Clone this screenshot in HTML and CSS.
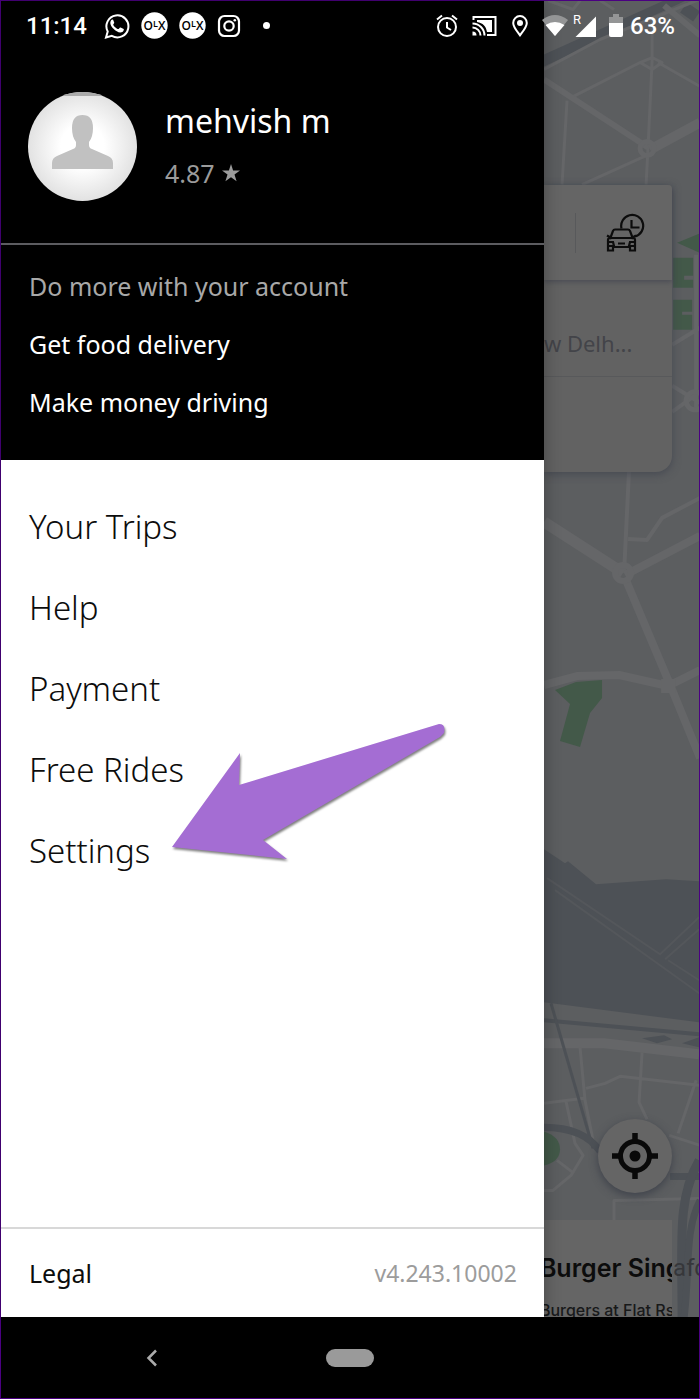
FILE: index.html
```
<!DOCTYPE html>
<html lang="en">
<head>
<meta charset="utf-8">
<meta name="viewport" content="width=device-width, initial-scale=1">
<title>Account menu</title>
<link rel="stylesheet" href="styles.css">
</head>
<body>
<div class="phone">
  <div class="screen">
    <header class="status">
      <div class="status-left">
        <span class="status-text">11:14</span>
        <svg class="whatsapp" width="26" height="26" viewBox="0 0 26 26" aria-label="WhatsApp">
          <path d="M2 24.500l1.700-6A11 11 0 1 1 7.800 22.800z" fill="none" stroke="#fff" stroke-width="2"/>
          <path d="M9.100 6.700c-.5-.6-1.400-.3-2 .5-2 3 .2 6.300 2.400 8.600 2.500 2.500 6 4.700 8.900 3.200 1.300-.8 1.700-2.400 1.300-2.900l-3.100-1.600c-.5-.2-.8 0-1.700 1.200-.4.500-1 .3-2.200-.3-1.700-.9-2.900-2.300-3.500-3.600-.2-.6.900-1.200 1.100-2.100z" fill="#fff"/>
        </svg>
        <svg width="27" height="27" viewBox="0 0 27 27" aria-label="OLX">
          <circle cx="13.500" cy="13.500" r="13.200" fill="#fff"/>
          <text class="olx" x="13.500" y="18">O<tspan class="olx-l" dy="-3">L</tspan><tspan dy="3">X</tspan></text>
        </svg>
        <svg width="27" height="27" viewBox="0 0 27 27" aria-label="OLX">
          <circle cx="13.500" cy="13.500" r="13.200" fill="#fff"/>
          <text class="olx" x="13.500" y="18">O<tspan class="olx-l" dy="-3">L</tspan><tspan dy="3">X</tspan></text>
        </svg>
        <svg width="24" height="24" viewBox="0 0 24 24" fill="none" stroke="#fff" aria-label="Instagram">
          <rect x="2" y="2" width="20" height="20" rx="5.500" stroke-width="2.200"/>
          <circle cx="12" cy="12" r="4.700" stroke-width="2.200"/>
          <circle cx="17.800" cy="6.200" r="1.300" fill="#fff" stroke="none"/>
        </svg>
        <span class="dot"></span>
      </div>
      <div class="status-right">
        <svg width="22" height="24" viewBox="0 0 22 24" fill="none" stroke="#fff" stroke-width="2" aria-label="Alarm">
          <circle cx="11" cy="13" r="9"/>
          <path d="M11 8v5.500l4 2.500M1 5.500l5-4M21 5.500l-5-4"/>
        </svg>
        <svg class="cast" width="25" height="22" viewBox="0 0 25 22" fill="none" stroke="#fff" stroke-width="2" aria-label="Casting">
          <path d="M1.500 5V2h22v18H15"/>
          <path d="M5 5h15v12h-5C14 11 11 8 5 7z" fill="#fff" stroke="none"/>
          <path d="M.5 8.500A12 12 0 0 1 12.500 20.500M.5 12.500a8 8 0 0 1 8 8"/>
          <path d="M.5 16.500a4 4 0 0 1 4 4h-4z" fill="#fff" stroke="none"/>
        </svg>
        <svg class="pin" width="16" height="22" viewBox="0 0 16 22" aria-label="Location">
          <path d="M8 20.300C4.500 15.500 1.200 11.800 1.200 7.900a6.800 6.800 0 0 1 13.600 0C14.800 11.800 11.500 15.500 8 20.300z" fill="none" stroke="#fff" stroke-width="2"/>
          <circle cx="8" cy="8" r="3" fill="#fff"/>
        </svg>
        <svg class="wifi" width="26" height="21" viewBox="0 0 26 21" aria-label="Wi-Fi">
          <path d="M13 21L0 5q13-10 26 0z" fill="#949596"/>
          <path d="M13 21L3.500 10q9.500-6 19 0z" fill="#fff"/>
        </svg>
        <svg class="signal" width="24" height="28" viewBox="0 0 24 28" aria-label="Roaming signal">
          <path d="M2.500 25L23 4.500V25z" fill="#fff"/>
          <text class="roaming" x="0" y="12">R</text>
        </svg>
        <svg class="battery" width="14" height="23" viewBox="0 0 14 23" aria-label="Battery">
          <path d="M0 3h4V0h6v3h4v8H0z" fill="#949596"/>
          <path d="M0 9h14v12q0 2-2 2H2q-2 0-2-2z" fill="#fff"/>
        </svg>
        <span class="status-text">63%</span>
      </div>
    </header>

    <aside class="drawer">
      <section class="profile">
        <svg class="avatar" viewBox="0 0 109 109" aria-label="Profile photo">
          <defs>
            <radialGradient id="photo"><stop offset=".4" stop-color="#fff"/><stop offset="1" stop-color="#e2e2e2"/></radialGradient>
            <clipPath id="round"><circle cx="54.500" cy="54.500" r="54.500"/></clipPath>
          </defs>
          <g clip-path="url(#round)">
            <rect width="109" height="109" fill="url(#photo)"/>
            <rect width="109" height="4" fill="#aaa"/>
            <path d="M24 77v-6q0-5 5-7l16-7q3-1 3-4v-3q-4-5-4-14 0-13 10.500-13T65 36q0 9-4 14v3q0 3 3 4l16 7q5 2 5 7v6z" fill="#c1c1c1"/>
          </g>
        </svg>
        <div class="identity">
          <h1 class="name">mehvish m</h1>
          <p class="rating">4.87
            <svg width="18" height="18" viewBox="0 0 18 18" aria-label="stars"><path d="M9 0l2.100 6.500H18l-5.500 4 2.100 6.800L9 13.200l-5.600 4.100 2.100-6.800L0 6.500h6.900z" fill="#9b9b9b"/></svg>
          </p>
        </div>
      </section>
      <section class="promo">
        <p class="promo-title">Do more with your account</p>
        <a class="promo-link" href="#food">Get food delivery</a>
        <a class="promo-link" href="#drive">Make money driving</a>
      </section>
      <nav class="menu">
        <a href="#trips">Your Trips</a>
        <a href="#help">Help</a>
        <a href="#payment">Payment</a>
        <a href="#free">Free Rides</a>
        <a href="#settings">Settings</a>
        <svg class="arrow" width="280" height="144" viewBox="0 0 280 144" aria-hidden="true">
          <path d="M4 128L72 34l-1 32L271 5q7 0 5 9l-4 4L95 121l24 19z" fill="#a46dd3"/>
        </svg>
      </nav>
      <footer class="drawer-footer">
        <a class="legal" href="#legal">Legal</a>
        <span class="version">v4.243.10002</span>
      </footer>
    </aside>

    <main class="map">
      <svg class="map-art" viewBox="544 1 155 1316" preserveAspectRatio="xMidYMid slice" aria-hidden="true">
        <rect x="544" y="1" width="155" height="1316" fill="#5c5e60"/>
        <g fill="#4d5156">
          <path d="M544 55L664 1h22L544 67z"/>
          <path d="M687 3l13 9-7 10-13-9z"/>
          <path d="M544 849l21 14 3-2 28 23 70-5 33 2v141l-155-20z"/>
          <path d="M642 1038l22-3 8 4-15 4zM682 1043l17-6v10z"/>
        </g>
        <g fill="none" stroke="#656668" stroke-linejoin="round">
          <path stroke-width="3" d="M544 70l56-30 99-40M573 97l67-34M658 63l42 24M567 101l-5 84M652 20v42l-4 85-2 38M640 63l12 7 10-7-10-5zM646 156l-64 29M548 1l25 9 8-10M600 1l14 9"/>
          <path stroke-width="6" d="M544 80l104 68M664 6l36 30"/>
          <path stroke-width="10" d="M650 150l50-27"/>
          <circle cx="647" cy="149" r="7" stroke-width="5"/>
          <path stroke-width="4" d="M629 470l-5 103M628 539l19 1 15-22 38-20M672 345l28-17M672 386l28 17M672 412l28-20M696 255v155"/>
          <circle cx="695" cy="401" r="9" stroke-width="5"/>
          <path stroke-width="11" d="M544 522l79 51"/>
          <path stroke-width="8" d="M625 575l75-39M625 578l43 102 32 78M544 685l33-9 42-1 49 11 32-16"/>
          <circle cx="623" cy="573" r="8" stroke-width="6"/>
          <path stroke-width="14" d="M661 686h14"/>
        </g>
        <g fill="none" stroke="#54575b" stroke-width="2">
          <path d="M547 878l113 76 39-37M555 890l144 103M668 960l31 20M665 959l34-30"/>
        </g>
        <g fill="none" stroke="#656668" stroke-linejoin="round" stroke-width="3">
          <path stroke-width="10" d="M544 1043h60l95 11"/>
          <path d="M580 1047l5 53 8 40M586 1088l19-5 15-7 79 9M642 1052l-3 50 8 17M696 1080l-18 53M544 1103l40-5M566 1101l9 42 8 12-12 20-18 15h-9M669 1135l31 10M557 1160l17 13M614 1220v-20l85-2"/>
        </g>
        <g fill="none" stroke="#4d5156">
          <path stroke-width="4" d="M544 1020l155 14"/>
          <path stroke-width="3" d="M551 1003l42 145"/>
          <path stroke-width="7" d="M544 1127q40 0 56 24M670 1176h30"/>
          <path stroke-width="9" d="M699 1160c-22 38-17 80-17 157"/>
          <path stroke-width="7" d="M700 1200c-16 30-10 70-16 117"/>
        </g>
        <g fill="#435949">
          <path d="M677 243l22-9v19zM673 258h20v18h-9v4h9v8h-20zM673 300h19v12h-10v3h10v15h-19z"/>
          <path d="M555 690l21-8 26-2v18l-12 15-10 34-20-6 10-37z"/>
          <path d="M544 1131q16 5 16 18 0 12-16 16z"/>
        </g>
        <text class="map-label" x="673" y="1276">afc</text>
      </svg>

      <div class="trip-card">
        <div class="search-row">
          <span class="rule"></span>
          <button class="schedule" type="button" aria-label="Schedule a ride">
            <svg width="40" height="40" viewBox="0 0 40 40" fill="none" stroke="#0c0c0c" stroke-width="2.200">
              <path d="M16.500 15.500a11 11 0 1 1 13.500 8M26.500 7v7.500h8"/>
              <path d="M5 26l3-8q.5-1.500 2-1.500h13q1.500 0 2 1.500l3 8M2 22.500l3.500 2M31 22.500l-3.500 2M3 37.500V27q0-2 2-2h23q2 0 2 2v10.500h-5V34H8v3.500zM4 29h4l1 4H4M29 29h-4l-1 4h5M13 30.500h7"/>
            </svg>
          </button>
        </div>
        <div class="place">w Delh...</div>
        <div class="place-empty"></div>
      </div>

      <div class="bottom">
        <button class="locate" type="button" aria-label="Centre on my location">
          <svg width="46" height="46" viewBox="0 0 46 46" fill="none" stroke="#090909">
            <circle cx="23" cy="23" r="14.500" stroke-width="5"/>
            <circle cx="23" cy="23" r="5.500" fill="#090909" stroke="none"/>
            <path stroke-width="5.500" d="M23 0v8M23 38v8M0 23h8M38 23h8"/>
          </svg>
        </button>
        <article class="offer">
          <h2 class="offer-title">Burger Sing</h2>
          <p class="offer-text">Burgers at Flat Rs</p>
        </article>
      </div>
    </main>
  </div>

  <nav class="system-bar">
    <button class="back" type="button" aria-label="Back">
      <svg width="12" height="18" viewBox="0 0 12 18" fill="none" stroke="#ababab" stroke-width="2.500"><path d="M10 1.500L2.500 9l7.500 7.500"/></svg>
    </button>
    <button class="home" type="button" aria-label="Home"></button>
    <span></span>
  </nav>
</div>
</body>
</html>
```
FILE: styles.css
```
* {
  box-sizing: border-box;
  margin: 0;
}

body {
  font-family: "Noto Sans", "Open Sans", sans-serif;
  background: #000;
}

button {
  border: 0;
  padding: 0;
  background: none;
}

a {
  color: inherit;
  text-decoration: none;
}

svg {
  display: block;
  flex: none;
}

.phone {
  display: flex;
  flex-direction: column;
  min-height: 100vh;
  border: 1px solid #4b0082;
}

.screen {
  position: relative;
  flex: 1;
  display: grid;
  grid-template-columns: 7fr 2fr;
}

/* Status bar, over the drawer and the map */
.status {
  position: absolute;
  inset: 0 0 auto;
  z-index: 3;
  display: flex;
  justify-content: space-between;
  height: 49px;
  padding: 0 24px 0 25px;
  color: #fff;
}

.status-left,
.status-right {
  display: flex;
  align-items: center;
}

.status-left { gap: 11px; }

.status-text {
  font: 500 24px/30px Roboto, sans-serif;
}

.whatsapp { margin-left: 6px; }

.olx {
  font: 600 12px "Open Sans", sans-serif;
  text-anchor: middle;
  fill: #000;
}

.olx-l { font-size: 9px; }

.dot {
  width: 7px;
  height: 7px;
  margin-left: 11px;
  border-radius: 50%;
  background: #fff;
}

.cast { margin-left: 14px; }
.pin { margin-left: 15px; }
.wifi { margin-left: 14px; }
.signal { margin-left: 5px; }
.battery { margin: 0 7px 0 12px; }

.roaming {
  font: 400 13px Roboto, sans-serif;
  fill: #fff;
}

/* Drawer */
.drawer {
  z-index: 2;
  display: flex;
  flex-direction: column;
  min-width: 0;
  background: #fff;
  box-shadow: 0 0 16px rgba(0, 0, 0, .3);
}

.profile {
  display: flex;
  gap: 28px;
  padding: 91px 27px 42px;
  border-bottom: 2px solid #5c5c60;
  background: #000;
}

.avatar {
  width: 109px;
  height: 109px;
}

.identity { padding-top: 6px; }

.name {
  font-weight: 400;
  font-size: 32px;
  line-height: 46px;
  color: #fff;
}

.rating {
  display: flex;
  align-items: center;
  gap: 7px;
  margin-top: 12px;
  font-size: 25px;
  line-height: 34px;
  color: #9b9b9b;
}

.promo {
  display: flex;
  flex-direction: column;
  padding: 12px 28px 29px;
  font-size: 25px;
  line-height: 58px;
  color: #fff;
  background: #000;
}

.promo-title { color: #a8a8a8; }

.menu {
  position: relative;
  flex: 1;
  display: flex;
  flex-direction: column;
  padding: 26px 28px;
  font-size: 33px;
  font-weight: 300;
  line-height: 81px;
  color: #0c0c0c;
}

.arrow {
  position: absolute;
  top: 259px;
  left: 167px;
  filter: drop-shadow(1px 2px 1px rgba(0, 0, 0, .5));
}

.drawer-footer {
  display: flex;
  align-items: center;
  justify-content: space-between;
  height: 90px;
  padding: 0 27px 0 28px;
  border-top: 2px solid #d8d8d8;
}

.legal {
  font-size: 25px;
  color: #0c0c0c;
}

.version {
  font-size: 23px;
  color: #9c9c9c;
}

/* Map behind the drawer */
.map {
  position: relative;
  display: flex;
  flex-direction: column;
  justify-content: space-between;
  min-width: 0;
  padding: 184px 27px 0 0;
  overflow: hidden;
}

.map-art {
  position: absolute;
  inset: 0;
  width: 100%;
  height: 100%;
}

.map-label {
  font: 24px Roboto, sans-serif;
  fill: #36373a;
}

.trip-card {
  position: relative;
  border-radius: 0 4px 16px 0;
  background: #626262;
  box-shadow: 0 2px 8px rgba(60, 64, 76, .7);
}

.search-row {
  display: flex;
  align-items: center;
  justify-content: space-between;
  height: 95px;
  padding: 0 27px 0 31px;
  border-radius: 0 4px 0 0;
  background: #656565;
  box-shadow: 0 2px 5px rgba(60, 64, 76, .6);
}

.rule {
  width: 1px;
  height: 40px;
  background: #58595b;
}

.place {
  height: 97px;
  padding-right: 43px;
  border-bottom: 1px solid #58595b;
  font-size: 22px;
  line-height: 127px;
  text-align: right;
  white-space: nowrap;
  color: #434449;
}

.place-empty { height: 95px; }

.bottom {
  position: relative;
  display: flex;
  flex-direction: column;
  align-items: flex-end;
  gap: 27px;
}

.locate {
  display: grid;
  place-items: center;
  width: 74px;
  height: 74px;
  border-radius: 50%;
  background: #656565;
  box-shadow: 0 3px 8px rgba(50, 54, 66, .7);
}

.offer {
  width: 100%;
  height: 97px;
  padding-top: 30px;
  overflow: hidden;
  font-family: Inter, sans-serif;
  text-indent: -4px;
  white-space: nowrap;
  color: #0c0c0c;
  background: #656565;
}

.offer-title {
  font-weight: 600;
  font-size: 25px;
  line-height: 36px;
}

.offer-text {
  margin-top: 12px;
  font-weight: 500;
  font-size: 16px;
  line-height: 24px;
  color: #18191a;
}

/* System navigation */
.system-bar {
  display: grid;
  grid-template-columns: 1fr 48px 1fr;
  align-items: center;
  height: 81px;
  background: #000;
}

.back { justify-self: center; padding-right: 24px; }

.home {
  height: 18px;
  border-radius: 9px;
  background: #9a9a9a;
}
```
